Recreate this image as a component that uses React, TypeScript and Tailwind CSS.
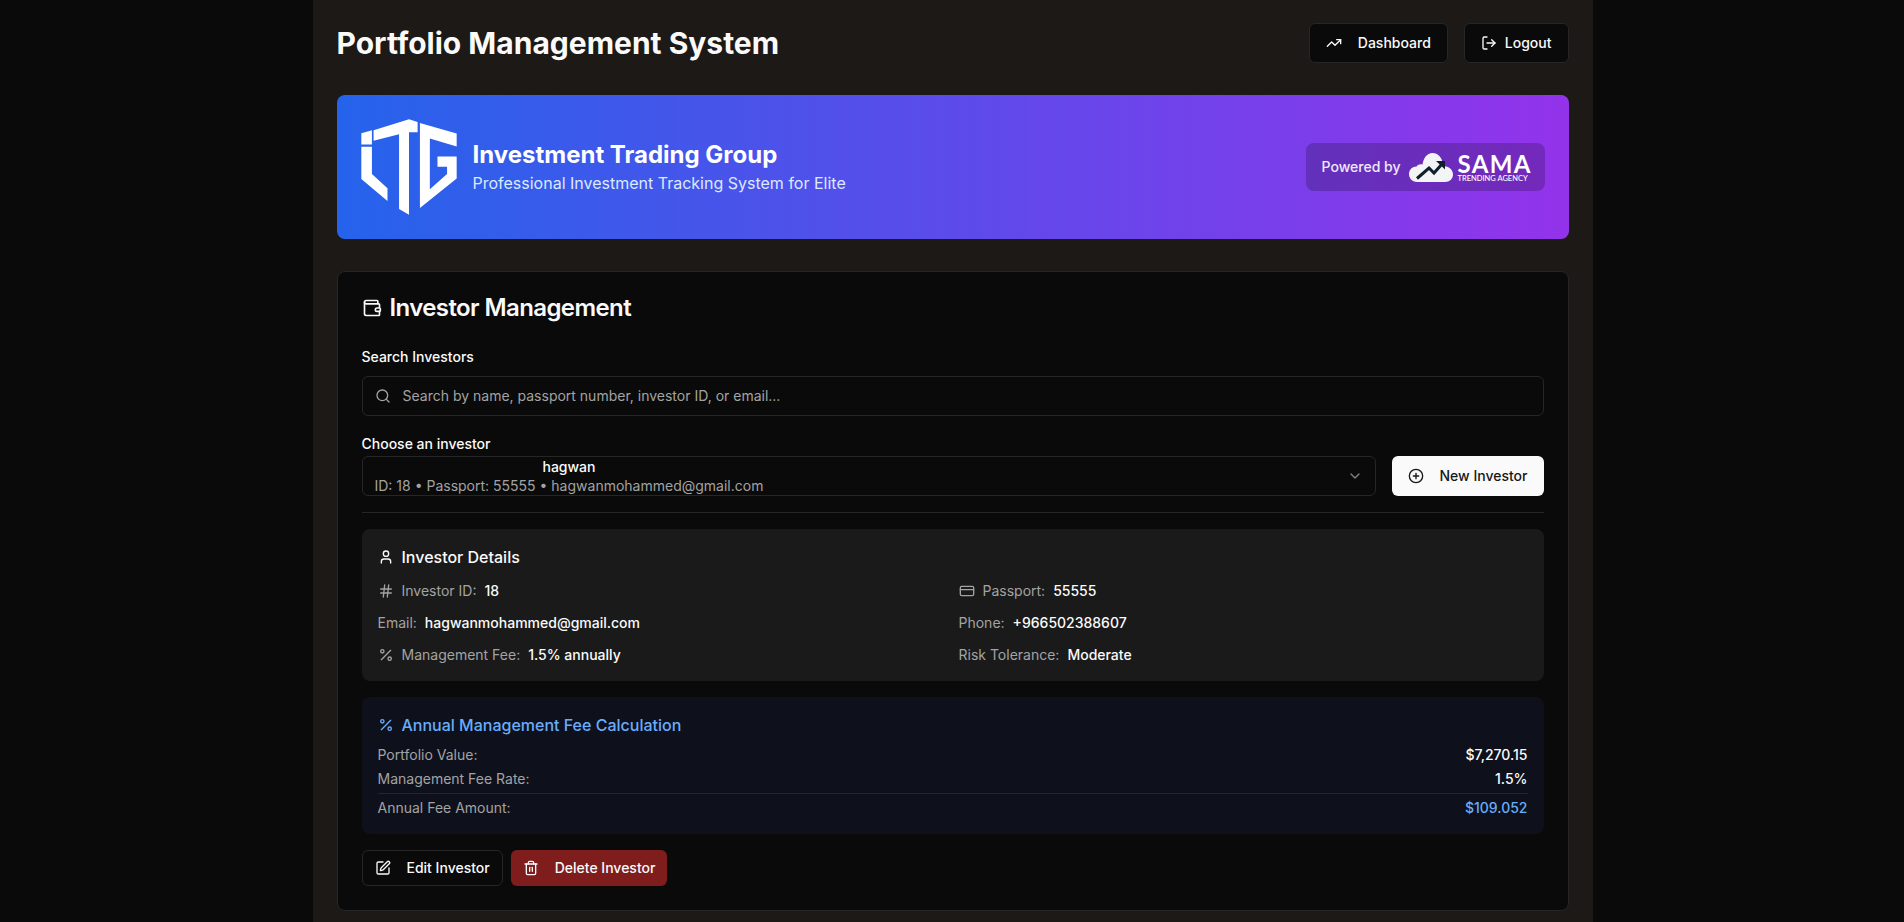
import { TrendingUp, LogOut, Wallet, Search, CirclePlus, User, Hash, CreditCard, Percent, SquarePen, Trash2, ChevronDown } from "lucide-react";
import type { ReactNode } from "react";

function ItgLogo() {
  return (
    <svg viewBox="62 27 290 288" width="96" height="96" fill="#fff" className="shrink-0">
      <polygon points="63,69 95,60 95,103 63,103" />
      <polygon points="63,110 95,110 95,192 142,235 142,274 63,207" />
      <polygon points="100,60 207,27 233,35 233,66 207,66 207,315 177,298 177,72 100,92" />
      <polygon points="240,38 351,70 351,109 270,85 270,238 322,192 322,170 293,170 293,139 351,139 351,206 240,295" />
    </svg>
  );
}

function SamaLogo() {
  return (
    <div className="flex h-8 w-[120px] items-center gap-[5px]">
      <svg viewBox="0 0 44 29" width="44" height="29" className="shrink-0">
        <path d="M8 29 C3 29 0 25 0 21 C0 16.5 3.5 13.5 7.5 13.5 C9 11.5 11 11 13.5 11.5 C14.5 5 18 0 23.5 0 C29 0 33 4.5 33.5 10 C34 11 34 12 34 13 C40 13 44 17 44 21.5 C44 26 40.5 29 36 29 Z" fill="#f3f4f6" />
        <path d="M8 25.5 L20 15 L25 20 L33 11" fill="none" stroke="#0f1f2e" strokeWidth="3" />
        <polygon points="27,8 36,8 36,16.5" fill="#0f1f2e" />
      </svg>
      <div className="flex flex-col pt-[3px] font-['Lato',sans-serif] text-white">
        <span className="text-[24px] leading-[19px] font-bold tracking-[1.4px]">SAMA</span>
        <span className="mt-px text-[7.5px] leading-[9px] font-medium whitespace-nowrap">TRENDING AGENCY</span>
      </div>
    </div>
  );
}

function Row({ icon, label, value }: { icon?: ReactNode; label: string; value: string }) {
  return (
    <div className="flex h-5 items-center gap-2 text-sm">
      {icon}
      <span className="text-[#a3a3a3]">{label}</span>
      <span className="font-medium text-[#fafafa]">{value}</span>
    </div>
  );
}

function FeeRow({ label, value, valueClass }: { label: string; value: string; valueClass: string }) {
  return (
    <div className="flex h-5 items-center justify-between text-sm">
      <span className="text-[#a3a3a3]">{label}</span>
      <span className={valueClass}>{value}</span>
    </div>
  );
}

export default function App() {
  return (
    <div className="h-screen overflow-hidden bg-[#0a0a0a] pl-px font-['Inter',sans-serif] text-[#fafafa]">
      <div className="mx-auto h-full w-[1280px] bg-[#1c1917] px-6 pt-[23px]">
        <header className="mb-8 flex h-10 items-center justify-between">
          <h1 className="text-3xl font-bold">Portfolio Management System</h1>
          <div className="flex gap-4">
            <button className="flex h-10 items-center gap-4 rounded-md border border-[#262626] bg-[#0a0a0a] px-4 text-sm font-medium">
              <TrendingUp size={16} />
              Dashboard
            </button>
            <button className="flex h-10 items-center gap-2 rounded-md border border-[#262626] bg-[#0a0a0a] px-4 text-sm font-medium">
              <LogOut size={16} />
              Logout
            </button>
          </div>
        </header>

        <section className="mb-8 flex h-36 items-center justify-between rounded-lg bg-[linear-gradient(to_right,#2563eb,#9333ea)] p-6 text-white">
          <div className="flex items-center gap-4">
            <ItgLogo />
            <div>
              <h2 className="text-2xl font-bold">Investment Trading Group</h2>
              <p className="text-base text-[#dbeafe]">Professional Investment Tracking System for Elite</p>
            </div>
          </div>
          <div className="flex items-center gap-2 rounded-lg bg-black/20 px-4 py-2">
            <span className="text-sm font-medium text-white/90">Powered by</span>
            <SamaLogo />
          </div>
        </section>

        <section className="rounded-lg border border-[#262626] bg-[#0a0a0a] p-6">
          <h2 className="mb-[27px] flex h-6 items-center gap-2 text-2xl leading-none font-semibold tracking-tight">
            <Wallet size={20} />
            Investor Management
          </h2>

          <label className="mb-[9px] block text-sm leading-5 font-medium">Search Investors</label>
          <div className="flex h-10 items-center gap-3 rounded-md border border-[#262626] bg-[#0a0a0a] px-3 text-sm text-[#a3a3a3]">
            <Search size={16} />
            <span>Search by name, passport number, investor ID, or email...</span>
          </div>

          <label className="mt-[18px] mb-[2px] block text-sm leading-5 font-medium">Choose an investor</label>
          <div className="flex gap-4">
            <div className="flex h-10 flex-1 items-center justify-between overflow-hidden rounded-md border border-[#262626] bg-[#0a0a0a] px-3 text-sm">
              <div className="inline-flex flex-col items-center leading-[19px]">
                <span className="font-medium">hagwan</span>
                <span className="text-[#a3a3a3]">ID: 18 • Passport: 55555 • hagwanmohammed@gmail.com</span>
              </div>
              <ChevronDown size={16} className="opacity-50" />
            </div>
            <button className="flex h-10 items-center gap-4 rounded-md bg-[#fafafa] px-4 text-sm font-medium text-[#171717]">
              <CirclePlus size={16} />
              New Investor
            </button>
          </div>

          <div className="mt-4 mb-4 border-t border-[#262626]" />

          <div className="rounded-lg bg-[#1a1a1a] p-4">
            <h3 className="mb-3 flex h-6 items-center gap-2 text-base font-medium">
              <User size={16} />
              Investor Details
            </h3>
            <div className="grid grid-cols-2 gap-3">
              <Row icon={<Hash size={16} className="text-[#a3a3a3]" />} label="Investor ID:" value="18" />
              <Row icon={<CreditCard size={16} className="text-[#a3a3a3]" />} label="Passport:" value="55555" />
              <Row label="Email:" value="hagwanmohammed@gmail.com" />
              <Row label="Phone:" value="+966502388607" />
              <Row icon={<Percent size={16} className="text-[#a3a3a3]" />} label="Management Fee:" value="1.5% annually" />
              <Row label="Risk Tolerance:" value="Moderate" />
            </div>
          </div>

          <div className="mt-4 rounded-lg bg-[#0e111c] p-4">
            <h3 className="mb-2 flex h-6 items-center gap-2 text-base font-medium text-[#68adfb]">
              <Percent size={16} />
              Annual Management Fee Calculation
            </h3>
            <div className="flex flex-col gap-1">
              <FeeRow label="Portfolio Value:" value="$7,270.15" valueClass="font-medium text-[#fafafa]" />
              <FeeRow label="Management Fee Rate:" value="1.5%" valueClass="font-medium text-[#fafafa]" />
              <div className="border-t border-[#262626] pt-1">
                <FeeRow label="Annual Fee Amount:" value="$109.052" valueClass="font-medium text-[#68adfb]" />
              </div>
            </div>
          </div>

          <div className="mt-4 flex gap-2">
            <button className="flex h-9 items-center gap-4 rounded-md border border-[#262626] bg-[#0a0a0a] px-3 text-sm font-medium">
              <SquarePen size={16} />
              Edit Investor
            </button>
            <button className="flex h-9 items-center gap-4 rounded-md bg-[#7f1d1d] px-3 text-sm font-medium">
              <Trash2 size={16} />
              Delete Investor
            </button>
          </div>
        </section>
      </div>
    </div>
  );
}
